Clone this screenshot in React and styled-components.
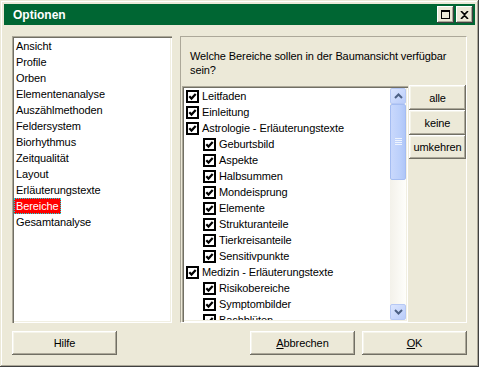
import React from 'react'
import styled, { createGlobalStyle } from 'styled-components'

const GlobalStyle = createGlobalStyle`
  html, body {
    margin: 0;
    padding: 0;
    background: #ECE9D8;
  }
  body {
    font-family: "Liberation Sans", Arial, sans-serif;
    font-size: 11px;
    letter-spacing: -0.1px;
    color: #000;
  }
`

const Window = styled.div`
  width: 479px;
  height: 367px;
  box-sizing: border-box;
  padding: 4px;
  background: #ECE9D8;
  display: flex;
  flex-direction: column;
  box-shadow: inset -1px -1px #404040, inset 1px 1px #ECE9D8,
    inset -2px -2px #ACA899, inset 2px 2px #fff;
`

const TitleBar = styled.div`
  height: 21px;
  background: #006633;
  display: flex;
  align-items: center;
  justify-content: space-between;
  padding: 0 2px 0 9px;
`

const Title = styled.span`
  color: #fff;
  font-weight: bold;
  font-size: 12px;
  letter-spacing: 0;
`

const CaptionButtons = styled.div`
  display: flex;
  gap: 2px;
`

const CaptionButton = styled.div`
  width: 17px;
  height: 17px;
  background: #ECE9D8;
  display: flex;
  align-items: center;
  justify-content: center;
  box-shadow: inset -1px -1px #404040, inset 1px 1px #fff,
    inset -2px -2px #ACA899;
`

const Body = styled.div`
  flex: 1;
  display: flex;
  flex-direction: column;
  padding: 11px 8px 8px 8px;
  gap: 8px;
`

const MainRow = styled.div`
  display: flex;
  gap: 8px;
  height: 287px;
`

const Sunken = styled.div`
  background: #fff;
  box-shadow: inset 1px 1px #ACA899, inset 2px 2px #716F64,
    inset -1px -1px #fff, inset -2px -2px #F1EFE2;
`

const NavList = styled(Sunken)`
  width: 160px;
  box-sizing: border-box;
  padding: 2px;
`

const NavItem = styled.div`
  height: 16px;
  line-height: 16px;
  padding: 0 2px;
  width: fit-content;
  box-sizing: border-box;
  background: ${p => (p.$selected ? '#FF0000' : 'transparent')};
  color: ${p => (p.$selected ? '#fff' : '#000')};
  outline: ${p => (p.$selected ? '1px dotted #00e8e8' : 'none')};
  outline-offset: -1px;
`

const Group = styled.div`
  width: 287px;
  box-sizing: border-box;
  border: 1px solid;
  border-color: #ACA899 #fff #fff #ACA899;
  display: flex;
  flex-direction: column;
  padding-top: 12px;
`

const Prompt = styled.p`
  margin: 0 9px 9px 9px;
  line-height: 14px;
  width: 262px;
  font-size: 11px;
`

const ListRow = styled.div`
  flex: 1;
  display: flex;
  gap: 1px;
  padding-left: 1px;
  min-height: 0;
`

const CheckListBox = styled(Sunken)`
  width: 226px;
  box-sizing: border-box;
  padding: 2px;
  display: flex;
  overflow: hidden;
`

const CheckItems = styled.div`
  flex: 1;
  overflow: hidden;
`

const CheckRow = styled.div`
  height: 16px;
  display: flex;
  align-items: center;
  gap: 3px;
  padding-left: ${p => 2 + p.$level * 17}px;
  white-space: nowrap;
`

const ScrollBar = styled.div`
  width: 16px;
  display: flex;
  flex-direction: column;
  background: linear-gradient(90deg, #F3F1EA, #FEFEFB);
`

const ScrollButton = styled.div`
  height: 16px;
  box-sizing: border-box;
  border: 1px solid #B6C8F4;
  border-radius: 2px;
  background: linear-gradient(135deg, #DCE6FE, #B9CCFA);
  display: flex;
  align-items: center;
  justify-content: center;
`

const Thumb = styled.div`
  height: 76px;
  box-sizing: border-box;
  border: 1px solid #A5BDF2;
  border-radius: 2px;
  background: linear-gradient(90deg, #C9D8FC, #BCD0FB 60%, #AFC6F8);
  display: flex;
  align-items: center;
  justify-content: center;
`

const Track = styled.div`
  flex: 1;
`

const SideButtons = styled.div`
  width: 57px;
  display: flex;
  flex-direction: column;
  margin-top: -1px;
`

const Button = styled.button`
  font-family: "Liberation Sans", Arial, sans-serif;
  font-size: 11px;
  letter-spacing: -0.1px;
  color: #000;
  width: ${p => p.$width || 105}px;
  height: ${p => p.$height || 24}px;
  padding: 0;
  border: none;
  background: #ECE9D8;
  box-shadow: inset -1px -1px #716F64, inset 1px 1px #fff,
    inset -2px -2px #ACA899, inset 2px 2px #F5F4EA;
  cursor: default;
`

const ButtonRow = styled.div`
  display: flex;
  gap: 7px;
`

const Spacer = styled.div`
  flex: 1;
`

const CheckBox = () => (
  <svg width="13" height="13" viewBox="0 0 13 13">
    <rect x="0" y="0" width="13" height="13" fill="#000" />
    <rect x="2" y="2" width="9" height="9" fill="#fff" />
    <path d="M3.3 6.3 L5.5 8.6 L9.7 3.9" fill="none" stroke="#000" strokeWidth="2.2" />
  </svg>
)

const Chevron = ({ up }) => (
  <svg width="9" height="6" viewBox="0 0 9 6">
    <path
      d={up ? 'M1 5 L4.5 1.5 L8 5' : 'M1 1 L4.5 4.5 L8 1'}
      fill="none"
      stroke="#4D6185"
      strokeWidth="2"
    />
  </svg>
)

const Grip = () => (
  <svg width="7" height="8" viewBox="0 0 7 8">
    {[0, 2, 4, 6].map(y => (
      <rect key={y} x="0" y={y} width="7" height="1" fill="#EEF4FE" />
    ))}
  </svg>
)

const navItems = [
  'Ansicht', 'Profile', 'Orben', 'Elementenanalyse', 'Auszählmethoden',
  'Feldersystem', 'Biorhythmus', 'Zeitqualität', 'Layout',
  'Erläuterungstexte', 'Bereiche', 'Gesamtanalyse',
]

const checkItems = [
  ['Leitfaden', 0], ['Einleitung', 0], ['Astrologie - Erläuterungstexte', 0],
  ['Geburtsbild', 1], ['Aspekte', 1], ['Halbsummen', 1], ['Mondeisprung', 1],
  ['Elemente', 1], ['Strukturanteile', 1], ['Tierkreisanteile', 1],
  ['Sensitivpunkte', 1], ['Medizin - Erläuterungstexte', 0],
  ['Risikobereiche', 1], ['Symptombilder', 1], ['Bachblüten', 1],
]

export default function App() {
  return (
    <>
      <GlobalStyle />
      <Window>
        <TitleBar>
          <Title>Optionen</Title>
          <CaptionButtons>
            <CaptionButton>
              <svg width="9" height="9" viewBox="0 0 9 9">
                <rect x="0.5" y="0.5" width="8" height="8" fill="none" stroke="#000" />
                <rect x="0" y="0" width="9" height="2" fill="#000" />
              </svg>
            </CaptionButton>
            <CaptionButton>
              <svg width="9" height="8" viewBox="0 0 9 8">
                <path d="M1 0 L4.5 3.5 L8 0 M1 8 L4.5 4.5 L8 8" stroke="#000" strokeWidth="1.6" fill="none" />
              </svg>
            </CaptionButton>
          </CaptionButtons>
        </TitleBar>
        <Body>
          <MainRow>
            <NavList>
              {navItems.map(item => (
                <NavItem key={item} $selected={item === 'Bereiche'}>{item}</NavItem>
              ))}
            </NavList>
            <Group>
              <Prompt>Welche Bereiche sollen in der Baumansicht verfügbar sein?</Prompt>
              <ListRow>
                <CheckListBox>
                  <CheckItems>
                    {checkItems.map(([label, level]) => (
                      <CheckRow key={label} $level={level}>
                        <CheckBox />
                        <span>{label}</span>
                      </CheckRow>
                    ))}
                  </CheckItems>
                  <ScrollBar>
                    <ScrollButton><Chevron up /></ScrollButton>
                    <Thumb><Grip /></Thumb>
                    <Track />
                    <ScrollButton><Chevron /></ScrollButton>
                  </ScrollBar>
                </CheckListBox>
                <SideButtons>
                  <Button $width={57} $height={25}>alle</Button>
                  <Button $width={57} $height={25}>keine</Button>
                  <Button $width={57} $height={24}>umkehren</Button>
                </SideButtons>
              </ListRow>
            </Group>
          </MainRow>
          <ButtonRow>
            <Button>Hilfe</Button>
            <Spacer />
            <Button><u>A</u>bbrechen</Button>
            <Button><u>O</u>K</Button>
          </ButtonRow>
        </Body>
      </Window>
    </>
  )
}
